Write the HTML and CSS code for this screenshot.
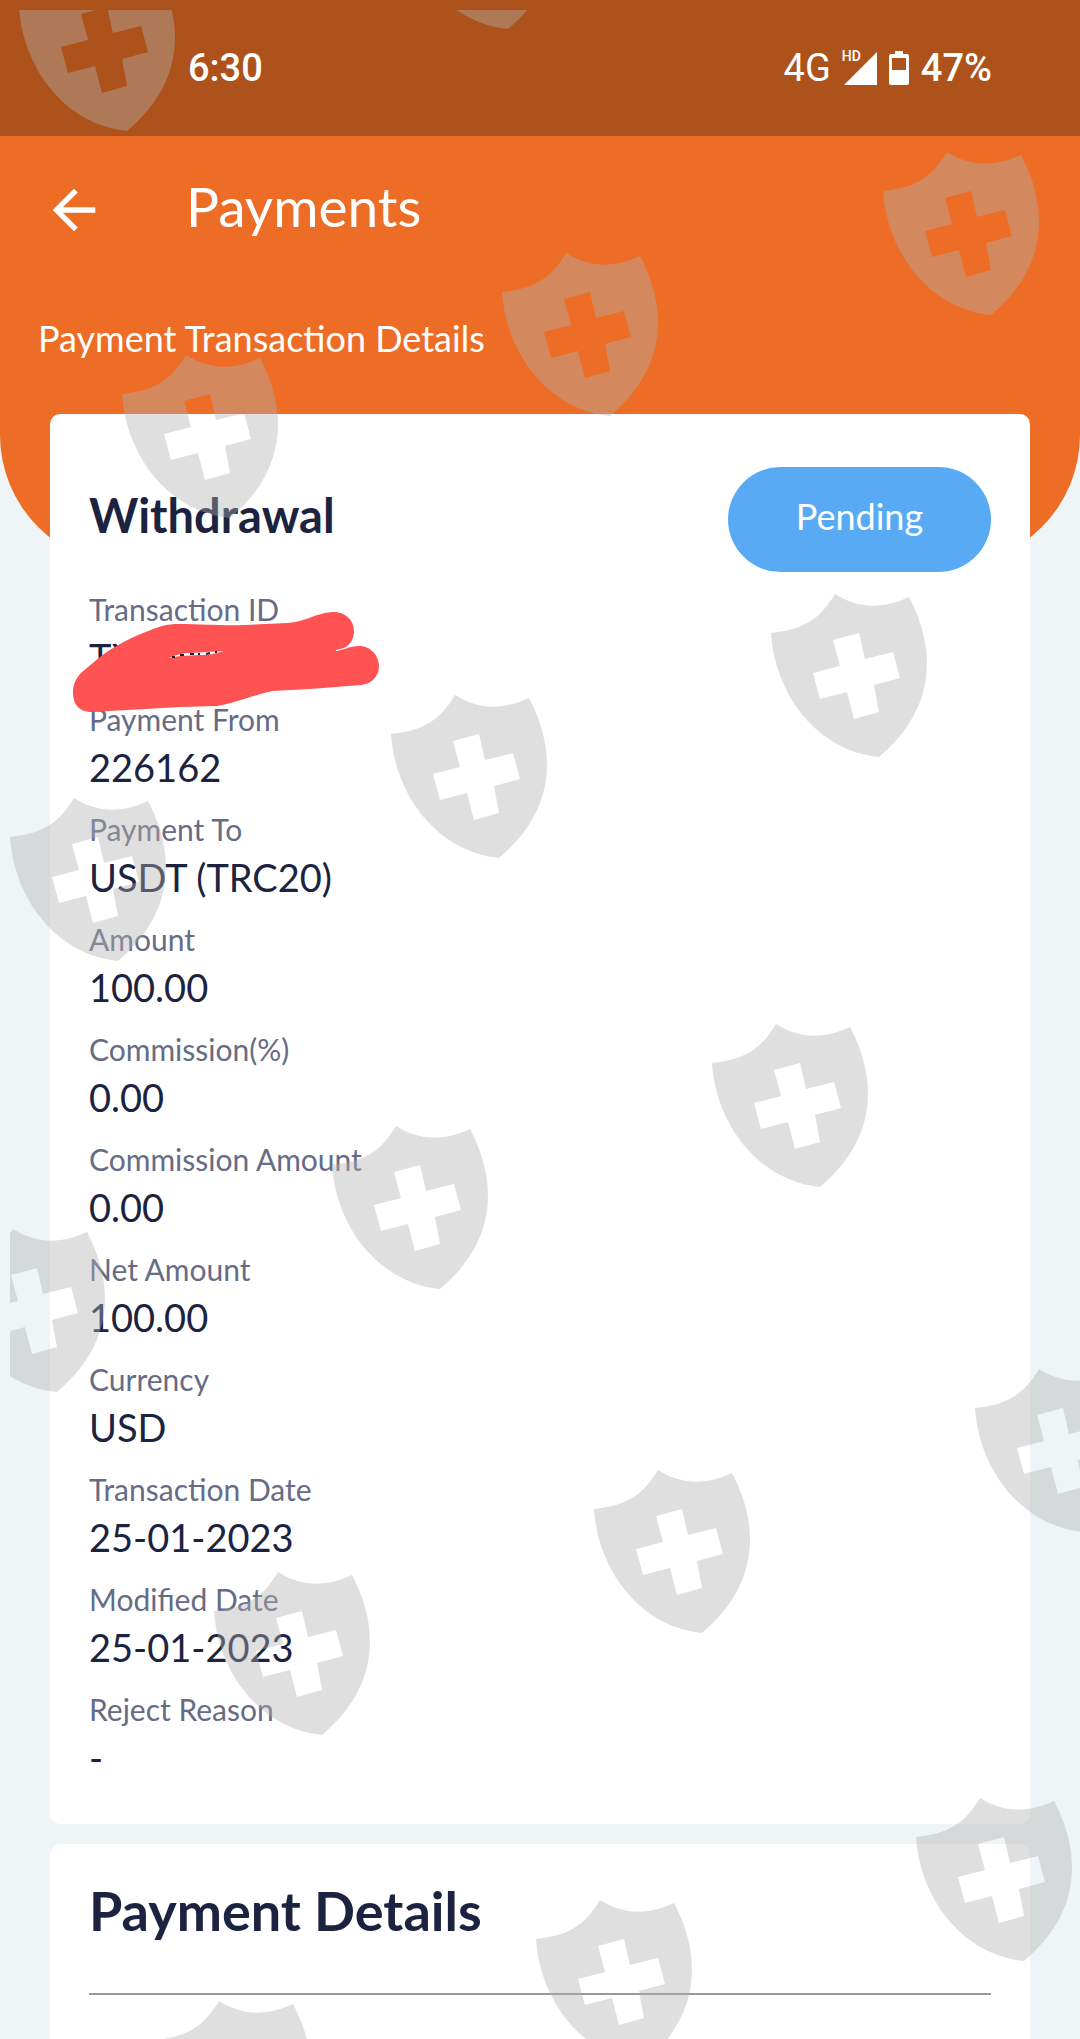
FILE: index.html
```html
<!DOCTYPE html>
<html lang="en">
<head>
    <meta charset="UTF-8">
    <meta name="viewport" content="width=device-width, initial-scale=1.0">
    <title>Payments</title>
    <link rel="stylesheet" href="styles.css">
</head>
<body>
    <div class="page">
        <div class="status-bar">
            <span class="time">6:30</span>
            <div class="status-icons">
                <span class="network">4G</span>
                <div class="signal">
                    <span class="hd">HD</span>
                    <svg width="34" height="34" viewBox="0 0 34 34"><path d="M34 1V34H1Z" fill="#fff"/></svg>
                </div>
                <svg class="battery" width="20" height="34" viewBox="0 0 20 34"><path fill="#fff" fill-rule="evenodd" d="M6 0H14V3H18Q20 3 20 5V32Q20 34 18 34H2Q0 34 0 32V5Q0 3 2 3H6ZM3 7V19H17V7Z"/></svg>
                <span>47%</span>
            </div>
        </div>

        <header class="header">
            <div class="nav">
                <button class="back-button" aria-label="Back">
                    <svg width="64" height="64" viewBox="0 0 24 24"><path fill="#fff" d="M20 11H7.83l5.59-5.59L12 4l-8 8 8 8 1.41-1.41L7.83 13H20v-2z"/></svg>
                </button>
                <h1>Payments</h1>
            </div>
            <p class="subtitle">Payment Transaction Details</p>
        </header>

        <main class="cards">
            <section class="card">
                <div class="card-head">
                    <h2>Withdrawal</h2>
                    <button class="status-button">Pending</button>
                </div>
                <dl class="details">
                    <div class="row">
                        <dt>Transaction ID</dt>
                        <dd>TX</dd>
                        <!-- marker over the id -->
                        <svg class="marker" width="312" height="106" viewBox="70 609 312 106">
                            <path fill="#ff5252" fill-rule="evenodd" d="M92 712C78 712 73 703 73 692C73 684 76 678 82 672L100 657C112 647 134 636 151 630C160 626 168 624 178 624C205 624 222 626 245 625L288 623C308 621 318 612 334 612C346 612 354 621 354 631C354 639 350 645 344 648L336 650V651C344 650 350 646 359 646C371 646 379 656 379 666C379 677 371 684 361 685L310 689L272 691C254 695 236 703 217 706L180 707ZM169 658Q180 653 190 653L224 651Q212 655 200 655L180 656Z"/>
                            <path stroke="#1c2340" stroke-width="2" fill="none" d="M172 657H175M180 655H184M190 654H194M198 654H200M206 654L210 653M215 652H217"/>
                        </svg>
                    </div>
                    <div class="row">
                        <dt>Payment From</dt>
                        <dd>226162</dd>
                    </div>
                    <div class="row">
                        <dt>Payment To</dt>
                        <dd>USDT (TRC20)</dd>
                    </div>
                    <div class="row">
                        <dt>Amount</dt>
                        <dd>100.00</dd>
                    </div>
                    <div class="row">
                        <dt>Commission(%)</dt>
                        <dd>0.00</dd>
                    </div>
                    <div class="row">
                        <dt>Commission Amount</dt>
                        <dd>0.00</dd>
                    </div>
                    <div class="row">
                        <dt>Net Amount</dt>
                        <dd>100.00</dd>
                    </div>
                    <div class="row">
                        <dt>Currency</dt>
                        <dd>USD</dd>
                    </div>
                    <div class="row">
                        <dt>Transaction Date</dt>
                        <dd>25-01-2023</dd>
                    </div>
                    <div class="row">
                        <dt>Modified Date</dt>
                        <dd>25-01-2023</dd>
                    </div>
                    <div class="row">
                        <dt>Reject Reason</dt>
                        <dd>-</dd>
                    </div>
                </dl>
            </section>

            <section class="card card-payment">
                <h2 class="big-title">Payment Details</h2>
                <hr>
            </section>
        </main>

        <!-- shield watermark -->
        <div class="watermark">
            <svg width="100%" height="100%" aria-hidden="true">
                <defs>
                    <path id="shield" fill-rule="evenodd" d="M0 39C30 36 48 27 64 0C88 15 112 15 138 3C168 60 162 118 108 163C47 157 4 101 0 39ZM62 46L69 72L42 79L49 105L76 98L83 125L108 118L103 91L129 84L122 58L94 65L88 39Z"/>
                </defs>
                <g fill="#b1b1b1" transform="translate(-10 -10)">
                    <use href="#shield" x="19" y="-32"/>
                    <use href="#shield" x="400" y="-134"/>
                    <use href="#shield" x="883" y="152"/>
                    <use href="#shield" x="502" y="253"/>
                    <use href="#shield" x="122" y="355"/>
                    <use href="#shield" x="771" y="594"/>
                    <use href="#shield" x="391" y="695"/>
                    <use href="#shield" x="10" y="798"/>
                    <use href="#shield" x="712" y="1024"/>
                    <use href="#shield" x="332" y="1126"/>
                    <use href="#shield" x="-51" y="1229"/>
                    <use href="#shield" x="975" y="1369"/>
                    <use href="#shield" x="594" y="1470"/>
                    <use href="#shield" x="214" y="1572"/>
                    <use href="#shield" x="916" y="1798"/>
                    <use href="#shield" x="536" y="1900"/>
                    <use href="#shield" x="155" y="2001"/>
                </g>
            </svg>
        </div>
    </div>
</body>
</html>
```

FILE: styles.css
```css
* {
    box-sizing: border-box;
}
body {
    margin: 0;
    font-family: Lato, "Open Sans", sans-serif;
    background-color: #eff4f7;
    color: #1c2340;
}
h1, h2, p, dl, dd {
    margin: 0;
}
svg {
    display: block;
}
button {
    border: none;
    font-family: inherit;
    color: white;
    cursor: pointer;
}
.page {
    position: relative;
    display: flex;
    flex-direction: column;
    min-height: 100vh;
    overflow: hidden;
}
.status-bar {
    display: flex;
    align-items: center;
    justify-content: space-between;
    height: 136px;
    padding: 0 88px 0 188px;
    background-color: #ae521b;
    color: white;
    font-family: Roboto, sans-serif;
    font-size: 38px;
    font-weight: 500;
}
.status-icons {
    display: flex;
    align-items: center;
    gap: 12px;
}
.network {
    font-weight: 400;
}
.signal {
    position: relative;
}
.hd {
    position: absolute;
    left: -1px;
    top: -2px;
    font-size: 14px;
    line-height: 14px;
}
.header {
    height: 429px;
    padding: 38px 38px 0;
    background-color: #ed6d26;
    border-radius: 0 0 130px 130px;
    color: white;
}
.nav {
    display: flex;
    align-items: flex-start;
    gap: 76px;
}
.back-button {
    width: 72px;
    height: 72px;
    padding: 4px;
    background: none;
}
h1 {
    font-size: 55px;
    line-height: 64px;
    font-weight: 400;
}
.subtitle {
    margin-top: 68px;
    font-size: 36px;
    line-height: 48px;
}
.cards {
    display: flex;
    flex-direction: column;
    flex: 1;
    gap: 20px;
    margin-top: -151px;
    padding: 0 50px;
}
.card {
    padding: 53px 39px 41px;
    background-color: white;
    border-radius: 10px;
}
.card-head {
    display: flex;
    justify-content: space-between;
    align-items: flex-start;
}
h2 {
    font-size: 47px;
    line-height: 96px;
}
.status-button {
    width: 263px;
    height: 105px;
    padding: 0 0 8px;
    border-radius: 53px;
    background-color: #59aaf4;
    font-size: 36px;
}
.details {
    display: flex;
    flex-direction: column;
    gap: 14px;
    margin-top: 15px;
}
.row {
    position: relative;
}
dt {
    font-size: 30px;
    line-height: 44px;
    color: #666c85;
}
dd {
    font-size: 38px;
    line-height: 52px;
}
.marker {
    position: absolute;
    left: -19px;
    top: 22px;
    z-index: 1;
}
.card-payment {
    flex: 1;
    padding-top: 34px;
    border-radius: 10px 10px 0 0;
}
.big-title {
    font-size: 54px;
    line-height: 66px;
}
hr {
    height: 2px;
    margin: 49px 0 0;
    border: none;
    background-color: #999;
}
.watermark {
    position: absolute;
    inset: 10px 0 0 10px;
    z-index: 2;
    opacity: 0.4;
    pointer-events: none;
}
```
